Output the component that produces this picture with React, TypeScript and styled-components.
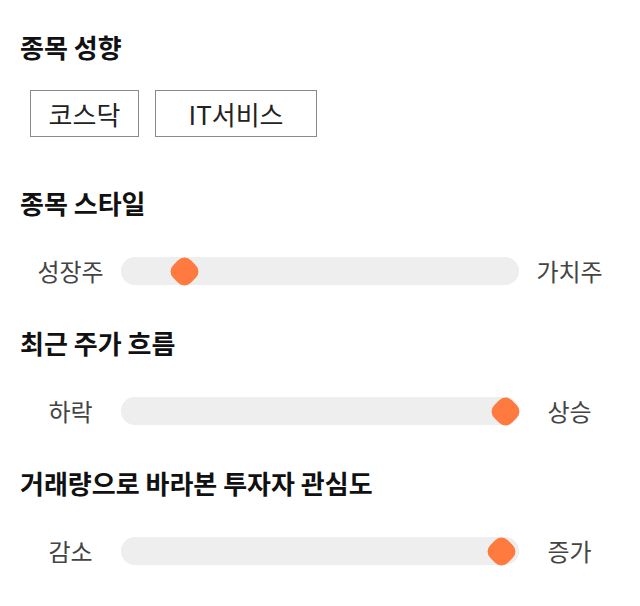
import React from "react";
import styled, { createGlobalStyle } from "styled-components";

const GlobalStyle = createGlobalStyle`
  html, body {
    margin: 0;
    padding: 0;
    background: #ffffff;
  }
  body {
    font-family: "Noto Sans CJK KR", "Noto Sans", sans-serif;
  }
`;

const Page = styled.div`
  display: flex;
  flex-direction: column;
  gap: 40px;
  padding: 30px 20px 20px 20px;
  width: 600px;
`;

const Section = styled.section<{ $gap: number; $extra?: number }>`
  display: flex;
  flex-direction: column;
  gap: ${(p) => p.$gap}px;
  padding-bottom: ${(p) => p.$extra ?? 0}px;
`;

const Heading = styled.h2`
  margin: 0;
  font-size: 26px;
  line-height: 34px;
  font-weight: 700;
  color: #111111;
  letter-spacing: 0;
`;

const ChipRow = styled.div`
  display: flex;
  gap: 16px;
  padding-left: 10px;
`;

const Chip = styled.div<{ $width: number }>`
  box-sizing: border-box;
  width: ${(p) => p.$width}px;
  height: 47px;
  border: 1px solid #8a8a8a;
  display: flex;
  align-items: center;
  justify-content: center;
  font-size: 26px;
  line-height: 1;
  color: #222222;
  background: #ffffff;
`;

const SliderRow = styled.div`
  display: grid;
  grid-template-columns: 101px 398px 101px;
  align-items: center;
  height: 30px;
`;

const SideLabel = styled.span`
  text-align: center;
  font-size: 24px;
  line-height: 30px;
  color: #444444;
`;

const Track = styled.div`
  position: relative;
  height: 28px;
  border-radius: 14px;
  background: #eeeeee;
`;

const Thumb = styled.div`
  position: absolute;
  top: 50%;
  width: 25px;
  height: 25px;
  margin-left: -12.5px;
  margin-top: -12.5px;
  border-radius: 9px;
  background: #ff7a3f;
  transform: rotate(45deg);
`;

type SliderProps = { left: string; right: string; value: number };

const Slider: React.FC<SliderProps> = ({ left, right, value }) => {
  const travel = 398 - 28;
  const x = 14 + travel * value;
  return (
    <SliderRow>
      <SideLabel>{left}</SideLabel>
      <Track>
        <Thumb style={{ left: `${x}px` }} />
      </Track>
      <SideLabel>{right}</SideLabel>
    </SliderRow>
  );
};

export default function App() {
  return (
    <>
      <GlobalStyle />
      <Page>
        <Section $gap={26} $extra={9}>
          <Heading>종목 성향</Heading>
          <ChipRow>
            <Chip $width={109}>코스닥</Chip>
            <Chip $width={162}>IT서비스</Chip>
          </ChipRow>
        </Section>
        <Section $gap={36}>
          <Heading>종목 스타일</Heading>
          <Slider left="성장주" right="가치주" value={0.135} />
        </Section>
        <Section $gap={36}>
          <Heading>최근 주가 흐름</Heading>
          <Slider left="하락" right="상승" value={1} />
        </Section>
        <Section $gap={36}>
          <Heading>거래량으로 바라본 투자자 관심도</Heading>
          <Slider left="감소" right="증가" value={0.99} />
        </Section>
      </Page>
    </>
  );
}
